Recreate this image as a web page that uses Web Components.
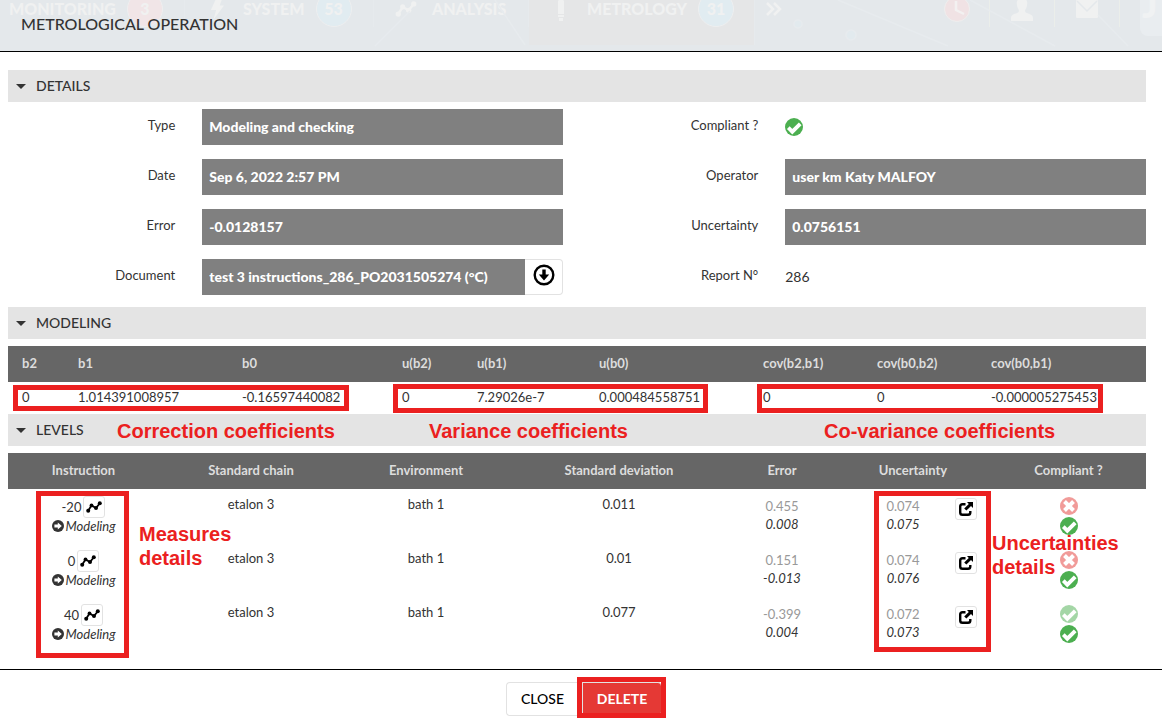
<!DOCTYPE html>
<html lang="en">
<head>
<meta charset="utf-8">
<title>Metrological operation</title>
<style>
  body { margin: 0; background: #fff; color: #333; font: 14px/18px Lato, "Liberation Sans", sans-serif; }
</style>
</head>
<body>
<operation-page></operation-page>

<script>
const ICONS = {
  ok: '<svg viewBox="0 0 18 18"><circle cx="9" cy="9" r="9" fill="#4caf50"/><path d="M3.300 9.700l4 4 7.900-7.900" fill="none" stroke="#fff" stroke-width="3.800"/></svg>',
  ko: '<svg viewBox="0 0 18 18"><circle cx="9" cy="9" r="9" fill="#e53935"/><path d="M4.500 4.500l9 9M13.500 4.500l-9 9" fill="none" stroke="#fff" stroke-width="4"/></svg>',
  chart: '<svg viewBox="0 0 16 12"><path d="M2 10L5.500 4.500L10 7L14 2" fill="none" stroke="currentColor" stroke-width="1.800"/><g fill="currentColor"><circle cx="2.200" cy="9.800" r="2"/><circle cx="5.500" cy="4.400" r="1.900"/><circle cx="10" cy="7" r="2"/><circle cx="13.800" cy="2.200" r="2"/></g></svg>',
  go: '<svg viewBox="0 0 12 12"><circle cx="6" cy="6" r="6" fill="#333"/><path d="M2.400 4.600h3.400v-2.200l4 3.600-4 3.600v-2.200h-3.400z" fill="#fff"/></svg>',
  share: '<svg viewBox="0 0 14 14"><path d="M6.500 2.200H3.500Q1.200 2.200 1.200 4.500V10.500Q1.200 12.800 3.500 12.800H9Q11.300 12.800 11.300 10.500V9" fill="none" stroke="#000" stroke-width="2.400"/><path d="M8 0h6v6l-2-2-4.600 4.600-2.200-2.200L9.800 2z" fill="#000"/></svg>',
  down: '<svg viewBox="0 0 22 22"><circle cx="11" cy="11" r="9.300" fill="none" stroke="#000" stroke-width="2.400"/><path d="M9.300 5.500h3.400v5h3.500L11 16.500 5.800 10.500h3.500z" fill="#000"/></svg>',
  bolt: '<svg viewBox="0 0 16 24"><path d="M7 0h7l-3 8h5L4 24l3-11H1z" fill="currentColor"/></svg>',
  probe: '<svg viewBox="0 0 8 24"><path d="M1 4l3-4 3 4v13H1zM1 18h6v2H1zM2 21h4v3H2z" fill="currentColor"/></svg>',
  more: '<svg viewBox="0 0 16 14"><path d="M1 1l6 6-6 6M8 1l6 6-6 6" fill="none" stroke="currentColor" stroke-width="2.500"/></svg>',
  clock: '<svg viewBox="0 0 26 26"><circle cx="13" cy="13" r="12.500" fill="#f0e2e4" stroke="#eeeeee"/><path d="M12 5v9l8 4" fill="none" stroke="#f3f1f1" stroke-width="2.500"/></svg>',
  user: '<svg viewBox="0 0 22 24"><path d="M11 1c4 0 6 3 5 7 0 3-2 4-2 6 0 3 8 2 8 7v3H0v-3c0-5 8-4 8-7 0-2-2-3-2-6-1-4 1-7 5-7z" fill="currentColor"/></svg>',
  mail: '<svg viewBox="0 0 22 18"><rect width="22" height="18" rx="1" fill="currentColor"/><path d="M1 1l10 10L21 1" fill="none" stroke="#e4e8eb" stroke-width="1.500"/></svg>'
};

function define(name, html, setup) {
  const template = document.createElement('template');
  template.innerHTML = '<style>*{box-sizing:border-box}[hidden]{display:none!important}</style>' + html;
  customElements.define(name, class extends HTMLElement {
    constructor() {
      super();
      this.attachShadow({ mode: 'open' }).append(template.content.cloneNode(true));
    }
    connectedCallback() { if (setup) setup(this, this.shadowRoot); }
  });
}

define('ui-icon', `
  <style>
    :host { display: inline-block; width: 18px; height: 18px; flex: none; }
    :host([faded]) { opacity: .5; }
    svg { display: block; width: 100%; height: 100%; }
  </style><span></span>`,
  (el, root) => { root.querySelector('span').innerHTML = ICONS[el.getAttribute('name')]; });

/* Red frame, drawn over the content it highlights */
define('call-out', `
  <style>
    :host { position: absolute; pointer-events: none; border: 5px solid #eb2020; box-sizing: border-box; }
  </style>`);

define('call-text', `
  <style>
    :host { position: absolute; pointer-events: none; white-space: nowrap; color: #eb2020;
      font: bold 20px/24px "Liberation Sans", Arial, sans-serif; }
  </style><slot></slot>`);

define('app-nav', `
  <style>
    :host { display: flex; align-items: center; height: 36px; color: #f0f1f1; font-size: 16px; font-weight: 900; }
    .item { display: flex; align-items: center; height: 100%; flex: none; border-right: 1px solid #e6eaed; }
    .item a { color: inherit; text-decoration: none; }
    .pic { width: 40px; margin: 0 6px 0 12px; display: flex; justify-content: center; }
    .badge { width: 36px; height: 36px; margin-left: 11px; border: 1px solid #eeeff0; border-radius: 50%;
      display: flex; align-items: center; justify-content: center; background: #e1ecf1; }
    .alert { background: #f1e5e7; }
    .first { padding-left: 9px; width: 185px; }
    .system { width: 189px; }
    .analysis { width: 155px; }
    .metrology { width: 226px; height: 72px; background: #e5e6e7; }
    .more { margin-left: 11px; width: 16px; height: 14px; }
    .tools { margin-left: auto; display: flex; align-items: center; }
    .tools > span { width: 65px; height: 36px; display: flex; justify-content: center; align-items: center; border-right: 1px solid #ebeeea; }
    .logo { width: 22px; height: 54px; margin-left: 20px; background: #e9edf0; border-radius: 0 0 0 8px; font-size: 36px;
      line-height: 44px; padding-left: 2px; overflow: hidden; color: #f0f2f3; }
  </style>
  <div class="item first"><a href="#monitoring">MONITORING</a><span class="badge alert">3</span></div>
  <div class="item system"><span class="pic"><ui-icon name="bolt" style="width:14px;height:24px"></ui-icon></span><a href="#system">SYSTEM</a><span class="badge">53</span></div>
  <div class="item analysis"><span class="pic"><ui-icon name="chart" style="width:22px;height:16px"></ui-icon></span><a href="#analysis">ANALYSIS</a></div>
  <div class="item metrology"><span class="pic"><ui-icon name="probe" style="width:8px;height:24px"></ui-icon></span><a href="#metrology">METROLOGY</a><span class="badge">31</span></div>
  <ui-icon class="more" name="more"></ui-icon>
  <div class="tools">
    <span><ui-icon name="clock" style="width:26px;height:26px"></ui-icon></span>
    <span><ui-icon name="user" style="width:22px;height:24px"></ui-icon></span>
    <span><ui-icon name="mail" style="width:22px;height:18px"></ui-icon></span>
    <div class="logo">J</div>
  </div>`);

define('dialog-header', `
  <style>
    :host { display: block; position: relative; height: 52px; box-sizing: border-box; overflow: hidden; background: #e4e8eb; border-bottom: 1px solid #000; }
    app-nav { position: absolute; top: -9px; left: 0; right: 0; }
    .deco { position: absolute; inset: 0; width: 100%; height: 100%; }
    h1 { position: relative; margin: 0; padding: 14px 21px; font-size: 16px; line-height: 20px; font-weight: 500; color: #333; }
  </style>
  <app-nav></app-nav>
  <svg class="deco" viewBox="0 0 1162 51" preserveAspectRatio="none" fill="none" stroke="#e7ebee" stroke-width="1.500">
    <path d="M375 46l35-35M495 0l30 45M838 0l110 46M970 0l85 46M1098 15l30 31"/>
    <circle cx="798" cy="24" r="4" fill="#e2eaee"/><circle cx="851" cy="35" r="5" fill="#e2eaee"/>
  </svg>
  <h1><slot></slot></h1>`);

define('panel-section', `
  <style>
    :host { display: block; position: relative; }
    h2 { margin: 0; font: inherit; }
    button { display: flex; align-items: center; gap: 10px; width: 100%; height: 32px; padding: 0 8px; border: 0;
      background: #e4e4e4; color: #333; font: inherit; font-weight: 500; cursor: pointer; text-align: left; }
    i { border: 5px solid transparent; border-top-color: #333; border-bottom: 0; }
    .body { padding-top: 7px; }
  </style>
  <h2><button type="button" aria-expanded="true"><i></i><span></span></button></h2>
  <div class="body"><slot></slot></div><slot name="over"></slot>`,
  (el, root) => {
    root.querySelector('h2 span').textContent = el.getAttribute('heading');
    const button = root.querySelector('button');
    button.onclick = () => {
      const body = root.querySelector('.body');
      body.hidden = !body.hidden;
      button.setAttribute('aria-expanded', String(!body.hidden));
    };
  });

define('detail-field', `
  <style>
    :host { display: grid; grid-template-columns: 35fr 65fr; height: 36px; }
    label { padding: 7px 27px 0 0; text-align: right; font-size: 13px; }
    .control { display: flex; min-width: 0; align-items: stretch; }
    input { flex: 1; min-width: 0; border: 0; border-radius: 0; outline: 0; padding: 0 7px; background: #808080; color: #fff;
      font: inherit; font-weight: 900; }
    output { align-self: center; }
    ui-icon { align-self: center; }
  </style>
  <label for="value"></label>
  <div class="control"></div>`,
  (el, root) => {
    root.querySelector('label').textContent = el.getAttribute('label');
    const control = root.querySelector('.control'), value = el.getAttribute('value');
    const kind = el.getAttribute('kind');
    if (kind === 'status') control.innerHTML = '<ui-icon id="value" name="ok" role="img" aria-label="Yes"></ui-icon>';
    else if (kind === 'plain') { control.innerHTML = '<output id="value"></output>'; control.firstChild.textContent = value; }
    else {
      control.innerHTML = '<input id="value" readonly><slot></slot>';
      control.firstChild.value = value;
    }
  });

define('icon-button', `
  <style>
    :host { display: inline-block; width: 22px; height: 22px; flex: none; }
    button { display: flex; width: 100%; height: 100%; align-items: center; justify-content: center; padding: 0;
      border: 1px solid #e2e2e2; border-radius: 3px; background: #fff; color: #000; cursor: pointer; }
    :host([attached]) { width: 38px; height: 36px; }
    :host([attached]) button { border-radius: 0 4px 4px 0; border-left: 0; padding-bottom: 4px; }
  </style>
  <button type="button"><slot></slot></button>`,
  (el, root) => root.querySelector('button').setAttribute('aria-label', el.getAttribute('label')));

const TABLE_STYLE = `
  :host { display: block; }
  table { width: 100%; table-layout: fixed; border-collapse: collapse; }
  th { height: 36px; padding: 0 14px 2px; background: #666; color: #ddd; font-size: 13px; font-weight: 700; white-space: nowrap; }
  td { vertical-align: top; font-size: 13px; }`;

const columns = widths => '<colgroup>' + widths.map(w => `<col style="width:${w}px">`).join('') + '</colgroup>';
const heads = names => '<thead><tr>' + names.map(n => `<th scope="col">${n}</th>`).join('') + '</tr></thead>';

define('model-table', `
  <style>${TABLE_STYLE}
    th { text-align: left; }
    td { height: 32px; padding: 0 14px; line-height: 30px; white-space: nowrap; }
  </style>
  <table>${columns([56, 164, 160, 75, 122, 164, 114, 114, 169])}
  ${heads(['b2', 'b1', 'b0', 'u(b2)', 'u(b1)', 'u(b0)', 'cov(b2,b1)', 'cov(b0,b2)', 'cov(b0,b1)'])}
  <tbody><tr>${['0', '1.014391008957', '-0.16597440082', '0', '7.29026e-7', '0.000484558751', '0', '0', '-0.000005275453'].map(v => `<td>${v}</td>`).join('')}</tr></tbody></table>`);

const LEVELS = [
  ['-20', '0.011', '0.455', '0.008', '0.074', '0.075', 'ko'],
  ['0', '0.01', '0.151', '-0.013', '0.074', '0.076', 'ko'],
  ['40', '0.077', '-0.399', '0.004', '0.072', '0.073', 'ok']
];

define('levels-table', `
  <style>${TABLE_STYLE}
    th { text-align: center; padding: 0 0 2px; }
    td { height: 54px; padding: 6px 0 0; text-align: center; }
    td.pair { padding-top: 8px; }
    .raw { display: block; color: #999; }
    em { display: block; }
    .line { display: flex; justify-content: center; align-items: center; gap: 2px; height: 20px; }
    .model { height: 18px; }
    .uncertainty { display: flex; justify-content: center; gap: 35px; padding-left: 37px; }
    .uncertainty icon-button { margin-top: 1px; }
    .status { display: flex; flex-direction: column; align-items: center; gap: 2px; }
  </style>
  <table>${columns([151, 184, 166, 220, 106, 156, 155])}
  ${heads(['Instruction', 'Standard chain', 'Environment', 'Standard deviation', 'Error', 'Uncertainty', 'Compliant ?'])}
  <tbody>${LEVELS.map(([level, deviation, e1, e2, u1, u2, state]) => `<tr>
    <td class="pair"><div class="line">${level}<icon-button label="Measures"><ui-icon name="chart" style="width:16px;height:12px"></ui-icon></icon-button></div>
      <div class="line model"><ui-icon name="go" style="width:12px;height:12px"></ui-icon><em>Modeling</em></div></td>
    <td>etalon 3</td><td>bath 1</td><td>${deviation}</td>
    <td class="pair"><span class="raw">${e1}</span><em>${e2}</em></td>
    <td class="pair"><div class="uncertainty"><div><span class="raw">${u1}</span><em>${u2}</em></div>
      <icon-button label="Uncertainties"><ui-icon name="share" style="width:14px;height:14px"></ui-icon></icon-button></div></td>
    <td class="pair"><div class="status"><ui-icon name="${state}" faded></ui-icon><ui-icon name="ok"></ui-icon></div></td>
  </tr>`).join('')}</tbody></table>`);

define('dialog-footer', `
  <style>
    :host { display: flex; justify-content: center; gap: 4px; border-top: 1px solid #000; padding: 12px 0 2px 6px; }
    button { height: 34px; padding: 0; border: 1px solid #e2e2e2; background: #fff; color: #000; font: inherit; font-weight: 500; cursor: pointer; }
    .close { width: 72px; border-right: 0; border-radius: 4px 0 0 4px; }
    .wrap { position: relative; }
    .delete { width: 80px; background: #e53935; color: #fff; font-weight: 700; border-radius: 0 4px 4px 0; }
    call-out { inset: -5px -4px -2px -5px; }
  </style>
  <button type="button" class="close">CLOSE</button>
  <div class="wrap"><button type="button" class="delete">DELETE</button><call-out></call-out></div>`);

define('operation-page', `
  <style>
    :host { display: block; }
    main { padding: 18px 16px 18px 8px; }
    .details { display: grid; grid-template-columns: 1fr 1fr; gap: 14px 28px; padding-bottom: 12px; }
  </style>
  <dialog-header>METROLOGICAL OPERATION</dialog-header>
  <main>
    <panel-section heading="DETAILS">
      <div class="details">
        <detail-field label="Type" value="Modeling and checking"></detail-field>
        <detail-field label="Compliant ?" kind="status"></detail-field>
        <detail-field label="Date" value="Sep 6, 2022 2:57 PM"></detail-field>
        <detail-field label="Operator" value="user km Katy MALFOY"></detail-field>
        <detail-field label="Error" value="-0.0128157"></detail-field>
        <detail-field label="Uncertainty" value="0.0756151"></detail-field>
        <detail-field label="Document" value="test 3 instructions_286_PO2031505274 (°C)"><icon-button attached label="Download"><ui-icon name="down" style="width:22px;height:22px"></ui-icon></icon-button></detail-field>
        <detail-field label="Report N°" kind="plain" value="286"></detail-field>
      </div>
    </panel-section>
    <panel-section heading="MODELING">
      <model-table></model-table>
      <call-out slot="over" style="left:5px;top:78px;width:336px;height:26px"></call-out>
      <call-out slot="over" style="left:385px;top:77px;width:315px;height:29px"></call-out>
      <call-out slot="over" style="left:749px;top:77px;width:346px;height:29px"></call-out>
    </panel-section>
    <panel-section heading="LEVELS">
      <levels-table></levels-table>
      <call-text slot="over" style="left:109px;top:5px">Correction coefficients</call-text>
      <call-text slot="over" style="left:421px;top:5px">Variance coefficients</call-text>
      <call-text slot="over" style="left:816px;top:5px">Co-variance coefficients</call-text>
      <call-out slot="over" style="left:28px;top:77px;width:93px;height:167px"></call-out>
      <call-text slot="over" style="left:131px;top:108px">Measures<br>details</call-text>
      <call-out slot="over" style="left:866px;top:77px;width:117px;height:161px"></call-out>
      <call-text slot="over" style="left:984px;top:117px">Uncertainties<br>details</call-text>
    </panel-section>
  </main>
  <dialog-footer></dialog-footer>`);
</script>
</body>
</html>
